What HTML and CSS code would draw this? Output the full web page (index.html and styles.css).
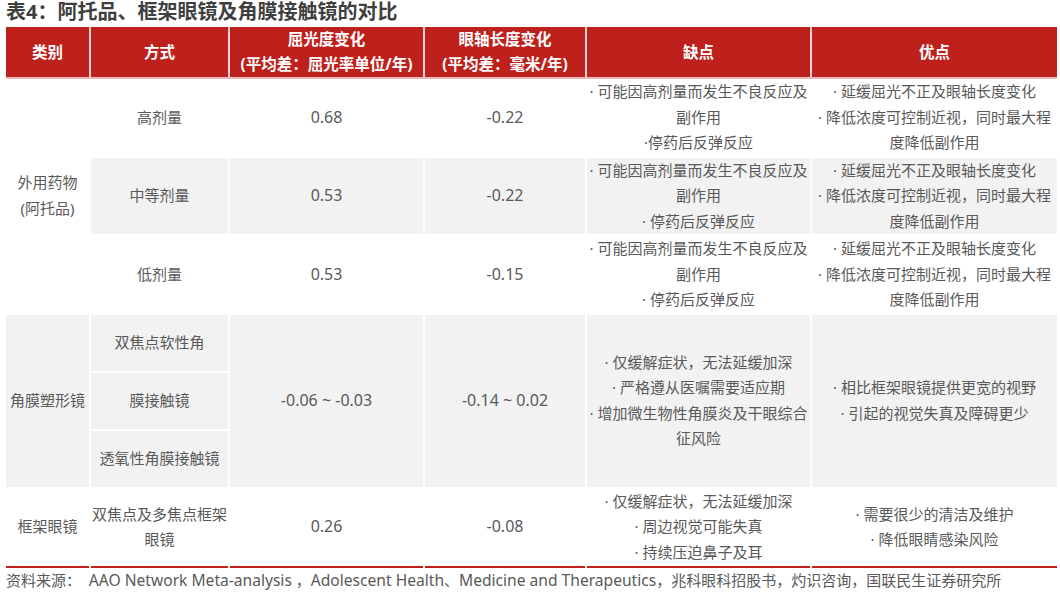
FILE: index.html
```html
<!DOCTYPE html>
<html lang="zh-CN">
<head>
<meta charset="utf-8">
<title>表4</title>
<link rel="stylesheet" href="styles.css">
</head>
<body>
<div class="page">
  <div class="title">表4：阿托品、框架眼镜及角膜接触镜的对比</div>
  <table class="cmp">
    <colgroup>
      <col class="c1"><col class="c2"><col class="c3"><col class="c4"><col class="c5"><col class="c6">
    </colgroup>
    <thead>
      <tr class="hrow">
        <th>类别</th>
        <th>方式</th>
        <th>屈光度变化<br>(平均差：屈光率单位/年)</th>
        <th>眼轴长度变化<br>(平均差：毫米/年)</th>
        <th>缺点</th>
        <th>优点</th>
      </tr>
    </thead>
    <tbody>
      <tr class="r78">
        <td rowspan="3" class="white">外用药物<br>(阿托品)</td>
        <td>高剂量</td>
        <td class="num">0.68</td>
        <td class="num">-0.22</td>
        <td>· 可能因高剂量而发生不良反应及<br>副作用<br>·停药后反弹反应</td>
        <td>· 延缓屈光不正及眼轴长度变化<br>· 降低浓度可控制近视，同时最大程<br>度降低副作用</td>
      </tr>
      <tr class="r78 gray">
        <td>中等剂量</td>
        <td class="num">0.53</td>
        <td class="num">-0.22</td>
        <td>· 可能因高剂量而发生不良反应及<br>副作用<br>· 停药后反弹反应</td>
        <td>· 延缓屈光不正及眼轴长度变化<br>· 降低浓度可控制近视，同时最大程<br>度降低副作用</td>
      </tr>
      <tr class="r78">
        <td>低剂量</td>
        <td class="num">0.53</td>
        <td class="num">-0.15</td>
        <td>· 可能因高剂量而发生不良反应及<br>副作用<br>· 停药后反弹反应</td>
        <td>· 延缓屈光不正及眼轴长度变化<br>· 降低浓度可控制近视，同时最大程<br>度降低副作用</td>
      </tr>
      <tr class="r57 gray">
        <td rowspan="3">角膜塑形镜</td>
        <td>双焦点软性角</td>
        <td rowspan="3" class="num">-0.06 ~ -0.03</td>
        <td rowspan="3" class="num">-0.14 ~ 0.02</td>
        <td rowspan="3">· 仅缓解症状，无法延缓加深<br>· 严格遵从医嘱需要适应期<br>· 增加微生物性角膜炎及干眼综合<br>征风险</td>
        <td rowspan="3">· 相比框架眼镜提供更宽的视野<br>· 引起的视觉失真及障碍更少</td>
      </tr>
      <tr class="r57 gray">
        <td>膜接触镜</td>
      </tr>
      <tr class="r57 gray">
        <td>透氧性角膜接触镜</td>
      </tr>
      <tr class="r77 last">
        <td>框架眼镜</td>
        <td>双焦点及多焦点框架<br>眼镜</td>
        <td class="num">0.26</td>
        <td class="num">-0.08</td>
        <td>· 仅缓解症状，无法延缓加深<br>· 周边视觉可能失真<br>· 持续压迫鼻子及耳</td>
        <td>· 需要很少的清洁及维护<br>· 降低眼睛感染风险</td>
      </tr>
    </tbody>
  </table>
  <div class="source">资料来源：&nbsp; <span class="lt">AAO Network Meta-analysis</span> ，<span class="lt">Adolescent Health</span>、<span class="lt">Medicine and Therapeutics</span>，兆科眼科招股书，灼识咨询，国联民生证券研究所</div>
</div>
</body>
</html>
```

FILE: styles.css
```css
html, body {
  margin: 0;
  padding: 0;
  background: #ffffff;
}

.page {
  padding: 0 3px 0 6px;
  font-family: "Noto Sans", "Noto Sans CJK SC", sans-serif;
  color: #595959;
}

.title {
  font-family: "Noto Sans", "Noto Sans CJK SC", sans-serif;
  font-weight: 700;
  font-size: 20px;
  line-height: 24px;
  height: 27px;
  color: #3f3f3f;
  white-space: nowrap;
}

.cmp {
  width: 1051px;
  table-layout: fixed;
  border-collapse: collapse;
  border-bottom: 2px solid #c0201c;
}

.c1 { width: 84px; }
.c2 { width: 139px; }
.c3 { width: 195px; }
.c4 { width: 162px; }
.c5 { width: 225px; }
.c6 { width: 246px; }

.cmp th {
  background: #be201c;
  color: #ffffff;
  font-weight: 700;
  font-size: 15.5px;
  line-height: 25px;
  padding: 0;
  text-align: center;
  vertical-align: middle;
  border-left: 2px solid #f2d2d1;
  border-right: 2px solid #f2d2d1;
  border-bottom: 2px solid #ebb9b7;
  white-space: nowrap;
}

.cmp th:first-child { border-left: 0; }
.cmp th:last-child { border-right: 0; }

.hrow { height: 51px; }

.cmp td {
  font-size: 15px;
  line-height: 25.5px;
  padding: 0;
  text-align: center;
  vertical-align: middle;
  white-space: nowrap;
  border: 2px solid #ffffff;
  color: #595959;
}

.cmp td.num {
  font-size: 16px;
}

.cmp td:first-child { border-left: 0; }
.cmp tr td:last-child { border-right: 0; }

.r78 { height: 78px; }
.r57 { height: 58px; }
.r77 { height: 79px; }

.gray td { background: #f2f2f2; }
.gray td.white, td.white { background: #ffffff; }

.last td { border-bottom: 0; }

.source {
  font-size: 15px;
  line-height: 24px;
  padding-top: 0;
  color: #595959;
  white-space: nowrap;
}

.source .lt {
  font-size: 15.6px;
}
```
